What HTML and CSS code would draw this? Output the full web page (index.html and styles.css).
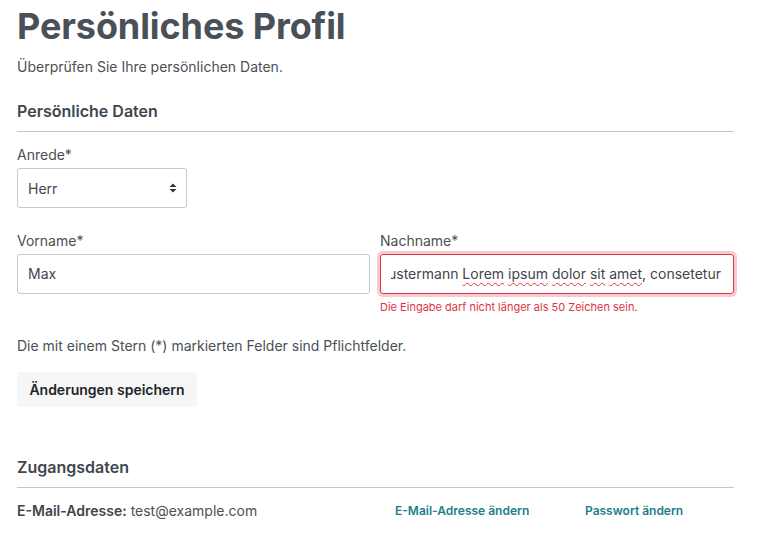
FILE: index.html
```html
<!DOCTYPE html>
<html lang="de">
<head>
<meta charset="utf-8">
<link rel="stylesheet" href="styles.css">
</head>
<body>
<main class="page">
  <h1 class="title">Persönliches Profil</h1>
  <p class="lead">Überprüfen Sie Ihre persönlichen Daten.</p>

  <section class="section">
    <h2 class="section-title">Persönliche Daten</h2>
    <div class="field field-select">
      <label class="label">Anrede*</label>
      <div class="select">
        <span>Herr</span>
        <svg class="select-arrows" width="8" height="10" viewBox="0 0 8 10"><path d="M4 0.5 L7.5 4 H0.5 Z M4 9.5 L7.5 6 H0.5 Z" fill="#333"/></svg>
      </div>
    </div>
    <div class="row">
      <div class="field">
        <label class="label">Vorname*</label>
        <div class="input"><div class="input-clip">Max</div></div>
      </div>
      <div class="field">
        <label class="label">Nachname*</label>
        <div class="input input-error"><div class="input-clip input-clip-end"><span class="input-text">Mustermann <span class="sp">Lorem</span> <span class="sp">ipsum</span> <span class="sp">dolor</span> <span class="sp">sit</span> <span class="sp">amet</span>, consetetur</span></div></div>
        <div class="error">Die Eingabe darf nicht länger als 50 Zeichen sein.</div>
      </div>
    </div>
    <p class="note">Die mit einem Stern (*) markierten Felder sind Pflichtfelder.</p>
    <button class="btn">Änderungen speichern</button>
  </section>

  <section class="section section-access">
    <h2 class="section-title">Zugangsdaten</h2>
    <div class="access-row">
      <div class="access-email"><strong>E-Mail-Adresse:</strong> test@example.com</div>
      <a class="link" href="#">E-Mail-Adresse ändern</a>
      <a class="link" href="#">Passwort ändern</a>
    </div>
  </section>
</main>
</body>
</html>
```
FILE: styles.css
```css
* { box-sizing: border-box; }
html, body { margin: 0; padding: 0; background: #fff; }
body {
  font-family: Inter, "Noto Sans", sans-serif;
  color: #495057;
  font-size: 14px;
}
.page {
  width: 717px;
  margin-left: 17px;
}
.title {
  margin: 0;
  padding-top: 4px;
  font-size: 36px;
  line-height: 44px;
  font-weight: 700;
  color: #495057;
  letter-spacing: -0.1px;
}
.lead {
  margin: 9px 0 0;
  font-size: 14px;
  line-height: 20px;
  color: #495057;
}
.section { margin-top: 22px; }
.section-title {
  margin: 0;
  font-size: 16px;
  line-height: 24px;
  font-weight: 600;
  color: #3f464d;
  padding-bottom: 8px;
  border-bottom: 1px solid #c4c6c8;
}
.field { display: flex; flex-direction: column; }
.field-select { margin-top: 13px; }
.label {
  font-size: 14px;
  line-height: 20px;
  color: #495057;
  margin-bottom: 3px;
}
.select {
  width: 170px;
  height: 40px;
  border: 1px solid #c6c8ca;
  border-radius: 3px;
  display: flex;
  align-items: center;
  justify-content: space-between;
  padding: 0 9px 0 10px;
  color: #3f464d;
}
.row {
  display: grid;
  grid-template-columns: 353px 354px;
  column-gap: 10px;
  margin-top: 23px;
}
.input {
  height: 40px;
  border: 1px solid #c6c8ca;
  border-radius: 3px;
  display: flex;
  align-items: center;
  padding: 0 12px 0 10px;
  color: #3f464d;
}
.input-clip {
  flex: 1;
  min-width: 0;
  display: flex;
  overflow: hidden;
  white-space: nowrap;
  line-height: 24px;
}
.input-clip-end { justify-content: flex-end; }
.input-error {
  border-color: #dc3545;
  box-shadow: 0 0 0 3px rgba(220, 53, 69, 0.25);
}
.input-text { flex: none; }
.sp {
  text-decoration: underline wavy #e03040;
  text-decoration-thickness: 1px;
  text-underline-offset: 3px;
}
.error {
  margin-top: 5px;
  font-size: 11px;
  line-height: 16px;
  color: #dc3545;
}
.note {
  margin: 21px 0 0;
  line-height: 20px;
  color: #495057;
}
.btn {
  margin-top: 16px;
  height: 35px;
  width: 180px;
  border: 0;
  border-radius: 3px;
  background: #f6f6f6;
  font-family: inherit;
  font-size: 14px;
  font-weight: 600;
  color: #212529;
  padding: 0 12px;
}
.section-access { margin-top: 48px; }
.access-row {
  display: grid;
  grid-template-columns: 378px 190px 1fr;
  align-items: center;
  margin-top: 13px;
  line-height: 20px;
}
.access-email strong { font-weight: 600; color: #3f464d; }
.link {
  color: #1b7f8a;
  font-size: 12px;
  font-weight: 600;
  text-decoration: none;
}
```
